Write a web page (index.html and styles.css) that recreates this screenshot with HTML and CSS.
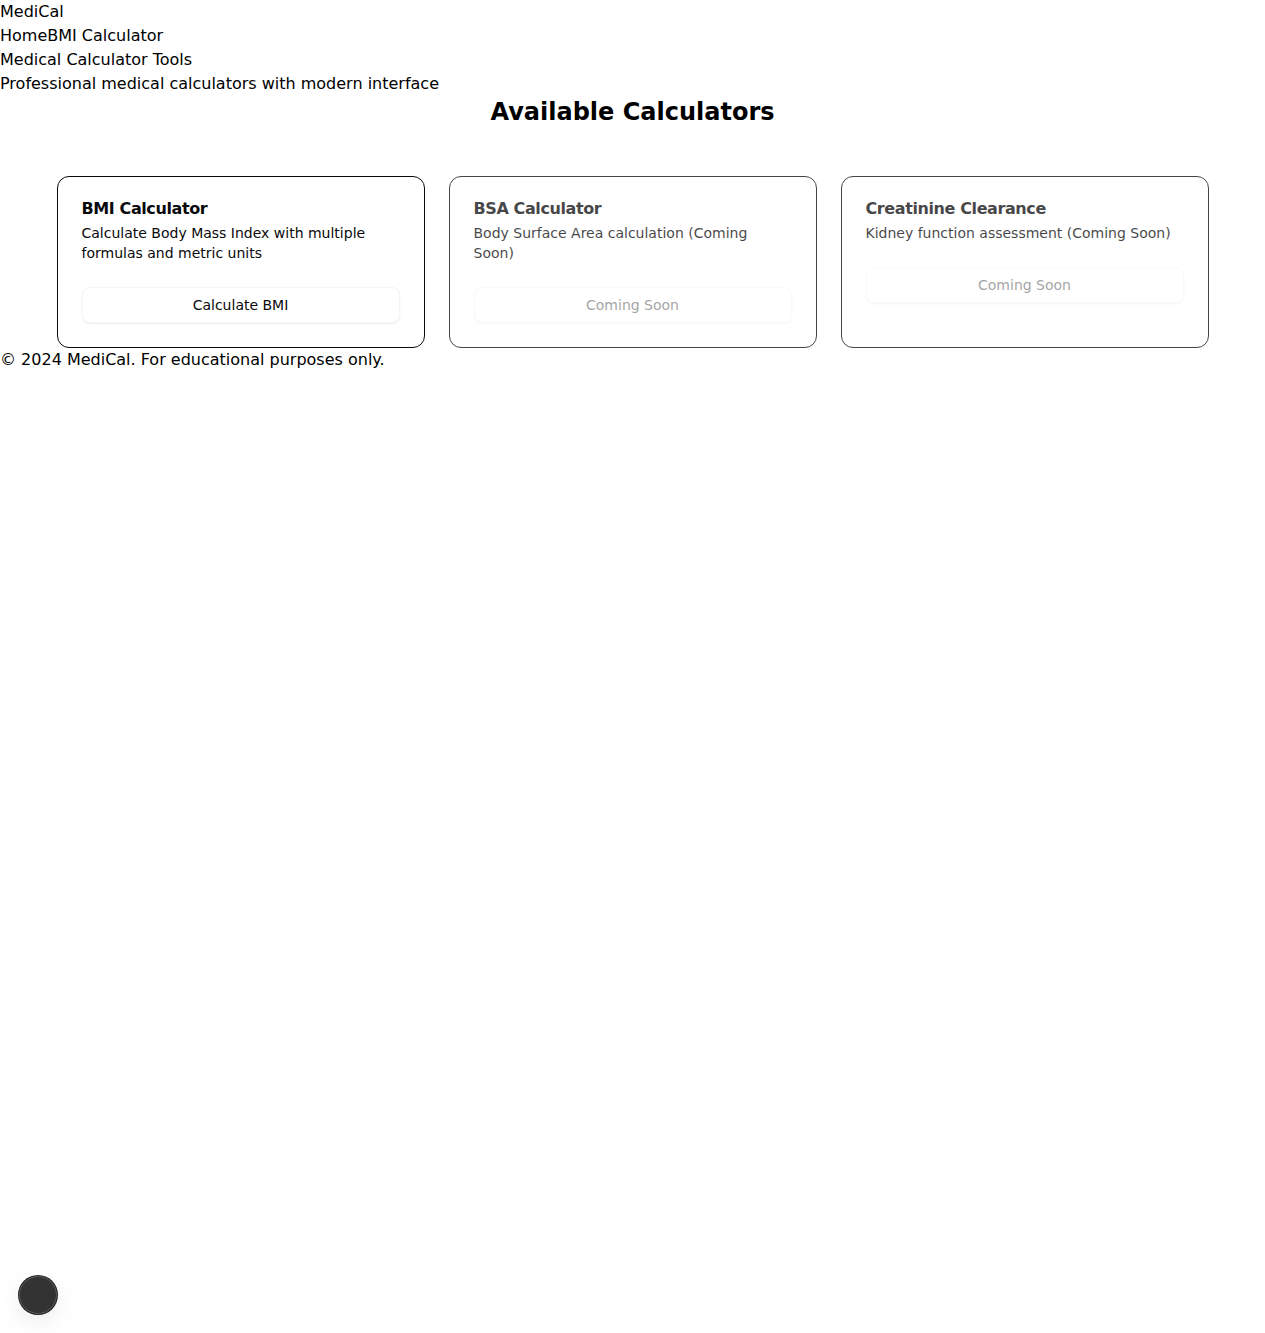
FILE: index.html
```html
<!DOCTYPE html>
<html lang="en">
<head>
<meta charset="utf-8">
<title>MediCal</title>
<link rel="stylesheet" href="styles.css">
</head>
<body>
<header class="site-header">
  <div class="brand">MediCal</div>
  <nav class="nav"><a href="#">Home</a><a href="#">BMI Calculator</a></nav>
</header>
<section class="hero">
  <h1 class="hero-title">Medical Calculator Tools</h1>
  <p class="hero-sub">Professional medical calculators with modern interface</p>
</section>
<main class="main">
  <h2 class="section-title">Available Calculators</h2>
  <div class="grid">
    <div class="card">
      <div class="card-header">
        <h3 class="card-title">BMI Calculator</h3>
        <p class="card-desc">Calculate Body Mass Index with multiple formulas and metric units</p>
      </div>
      <div class="card-content">
        <button class="btn">Calculate BMI</button>
      </div>
    </div>
    <div class="card card-muted">
      <div class="card-header">
        <h3 class="card-title">BSA Calculator</h3>
        <p class="card-desc">Body Surface Area calculation (Coming Soon)</p>
      </div>
      <div class="card-content">
        <button class="btn" disabled>Coming Soon</button>
      </div>
    </div>
    <div class="card card-muted">
      <div class="card-header">
        <h3 class="card-title">Creatinine Clearance</h3>
        <p class="card-desc">Kidney function assessment (Coming Soon)</p>
      </div>
      <div class="card-content">
        <button class="btn" disabled>Coming Soon</button>
      </div>
    </div>
  </div>
</main>
<footer class="footer">© 2024 MediCal. For educational purposes only.</footer>
<div class="dev-indicator"></div>
</body>
</html>
```

FILE: styles.css
```css
* { box-sizing: border-box; }
html, body {
  margin: 0;
  padding: 0;
  background: #fff;
  color: #000;
  font-family: "DejaVu Sans", sans-serif;
  font-size: 16px;
  line-height: 24px;
}
.site-header, .hero { margin: 0; }
.brand { line-height: 24px; }
.nav { display: block; }
.nav a { color: #000; text-decoration: none; }
.hero-title, .hero-sub {
  margin: 0;
  font-size: 16px;
  font-weight: normal;
  line-height: 24px;
}
.main {
  max-width: 1152px;
  margin: 0 auto;
}
.section-title {
  margin: 0 0 48px;
  font-size: 24px;
  line-height: 32px;
  font-weight: bold;
  text-align: center;
}
.grid {
  display: grid;
  grid-template-columns: repeat(3, 1fr);
  gap: 24px;
}
.card {
  border: 1px solid #09090b;
  border-radius: 12px;
  background: #fff;
  color: #09090b;
}
.card-muted { opacity: 0.75; }
.card-header {
  display: flex;
  flex-direction: column;
  gap: 6px;
  padding: 24px;
}
.card-title {
  margin: 0;
  font-size: 16px;
  line-height: 16px;
  font-weight: bold;
  letter-spacing: -0.025em;
}
.card-desc {
  margin: 0;
  font-size: 14px;
  line-height: 20px;
}
.card-content { padding: 0 24px 24px; }
.btn {
  display: block;
  width: 100%;
  height: 36px;
  border: 1px solid #f5f5f5;
  border-radius: 8px;
  background: #fff;
  box-shadow: 0 1px 2px rgba(0,0,0,0.07);
  font-family: "DejaVu Sans", sans-serif;
  font-size: 14px;
  color: #09090b;
  cursor: pointer;
}
.btn:disabled { opacity: 0.5; cursor: default; }
.footer { line-height: 24px; }
.dev-indicator {
  position: fixed;
  left: 19px;
  bottom: 19px;
  width: 38px;
  height: 38px;
  border-radius: 50%;
  background: #333;
  border: 1px solid #5a5a5a;
  box-shadow: 0 0 0 1px #222, 0 8px 24px rgba(0,0,0,0.08);
}
```
